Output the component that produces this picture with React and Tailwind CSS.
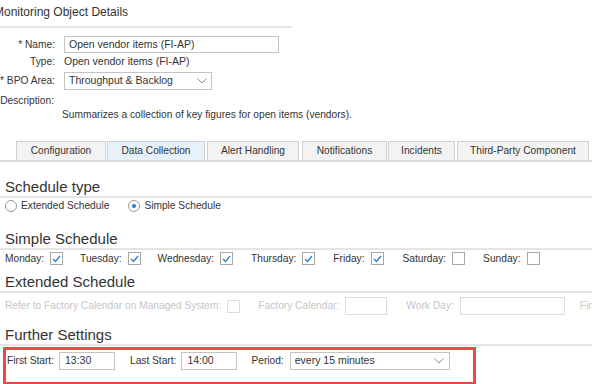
import React from "react";

const tabs = [
  { label: "Configuration", width: "w-[90px]", ml: "ml-0" },
  { label: "Data Collection", width: "w-[98px]", ml: "ml-[1px]", active: true },
  { label: "Alert Handling", width: "w-[92px]", ml: "ml-[2px]" },
  { label: "Notifications", width: "w-[85px]", ml: "ml-[3px]" },
  { label: "Incidents", width: "w-[67px]", ml: "ml-[1px]" },
  { label: "Third-Party Component", width: "w-[132px]", ml: "ml-[2px]" },
];

const days = [
  { label: "Monday:", ml: "ml-[5px]", checked: true },
  { label: "Tuesday:", ml: "ml-[17px]", checked: true },
  { label: "Wednesday:", ml: "ml-[17px]", checked: true },
  { label: "Thursday:", ml: "ml-[18px]", checked: true },
  { label: "Friday:", ml: "ml-[18px]", checked: true },
  { label: "Saturday:", ml: "ml-[19px]", checked: false },
  { label: "Sunday:", ml: "ml-[18px]", checked: false },
];

function Chevron() {
  return (
    <svg width="10" height="6" viewBox="0 0 10 6" className="shrink-0">
      <polyline
        points="0.5,0.5 5,5 9.5,0.5"
        fill="none"
        stroke="#8a8a8a"
        strokeWidth="1"
      />
    </svg>
  );
}

function Checkbox({ checked, disabled }) {
  return (
    <span
      className={
        "ml-[6px] flex h-[13px] w-[13px] shrink-0 items-center justify-center border bg-white " +
        (disabled ? "border-[#dcdcdc]" : "border-[#a8a8a8]")
      }
    >
      {checked ? (
        <svg width="9" height="8" viewBox="0 0 9 8">
          <polyline
            points="1,4 3.5,6.5 8,1"
            fill="none"
            stroke="#2a7fd0"
            strokeWidth="1.3"
          />
        </svg>
      ) : null}
    </span>
  );
}

function Heading({ children, className }) {
  return (
    <>
      <div className={"ml-[5px] h-[18px] text-[15px] leading-[18px] " + className}>
        {children}
      </div>
      <div className="h-[2px] w-full bg-[#e4e4e4]" />
    </>
  );
}

export default function App() {
  return (
    <div className="relative h-[384px] w-[592px] overflow-hidden bg-white font-['Liberation_Sans',Arial,sans-serif] text-[10.2px] text-[#333]">
      <div className="-ml-[6px] h-[24px] whitespace-nowrap text-[12px] leading-[24px]">
        Monitoring Object Details
      </div>
      <div className="mt-[2px] h-[2px] w-[292px] bg-[#e4e4e4]" />

      <div className="mt-[8px] flex h-[17px] items-center">
        <div className="flex w-[55px] justify-end whitespace-nowrap">* Name:</div>
        <div className="ml-[9px] flex h-[17px] w-[215px] items-center border border-[#c4c4c4] px-[4px] text-[10.5px]">
          Open vendor items (FI-AP)
        </div>
      </div>
      <div className="flex h-[18px] items-center">
        <div className="flex w-[55px] justify-end whitespace-nowrap">Type:</div>
        <div className="ml-[9px] text-[10.5px]">Open vendor items (FI-AP)</div>
      </div>
      <div className="mt-[1px] flex h-[18px] items-center">
        <div className="flex w-[55px] justify-end whitespace-nowrap">* BPO Area:</div>
        <div className="ml-[9px] flex h-[18px] w-[148px] items-center justify-between border border-[#c4c4c4] pl-[4px] pr-[4px] text-[10.5px]">
          <span>Throughput &amp; Backlog</span>
          <Chevron />
        </div>
      </div>
      <div className="mt-[4px] flex h-[14px] items-center">
        <div className="flex w-[54px] justify-end whitespace-nowrap">Description:</div>
      </div>
      <div className="flex h-[14px] items-center pl-[62px] whitespace-nowrap">
        Summarizes a collection of key figures for open items (vendors).
      </div>

      <div className="mt-[20px] flex h-[20px] items-end border-b-2 border-[#dadada] pl-[16px]">
        {tabs.map((tab) => (
          <div
            key={tab.label}
            className={
              "flex h-[19px] shrink-0 items-center justify-center whitespace-nowrap border border-b-0 border-[#cfcfcf] " +
              tab.width +
              " " +
              tab.ml +
              " " +
              (tab.active ? "bg-[#e6f1fb]" : "bg-[#f3f3f3]")
            }
          >
            {tab.label}
          </div>
        ))}
      </div>

      <Heading className="mt-[16px]">Schedule type</Heading>
      <div className="mt-[1px] flex h-[14px] items-center">
        <span className="ml-[5px] h-[12px] w-[12px] rounded-full border border-[#9a9a9a] bg-white" />
        <span className="ml-[4px]">Extended Schedule</span>
        <span className="ml-[19px] flex h-[12px] w-[12px] items-center justify-center rounded-full border border-[#9a9a9a] bg-white">
          <span className="h-[4px] w-[4px] rounded-full bg-[#1b7ed6]" />
        </span>
        <span className="ml-[4px]">Simple Schedule</span>
      </div>

      <Heading className="mt-[17px]">Simple Schedule</Heading>
      <div className="mt-[1px] flex h-[15px] items-center whitespace-nowrap">
        {days.map((day) => (
          <div key={day.label} className={"flex items-center " + day.ml}>
            <span>{day.label}</span>
            <Checkbox checked={day.checked} />
          </div>
        ))}
      </div>

      <Heading className="mt-[7px]">Extended Schedule</Heading>
      <div className="mt-[4px] flex h-[18px] items-center whitespace-nowrap text-[#c6c6c6]">
        <span className="ml-[5px]">Refer to Factory Calendar on Managed System:</span>
        <Checkbox disabled />
        <span className="ml-[18px]">Factory Calendar:</span>
        <span className="ml-[6px] h-[18px] w-[42px] shrink-0 border border-[#dcdcdc]" />
        <span className="ml-[19px]">Work Day:</span>
        <span className="ml-[6px] h-[18px] w-[105px] shrink-0 border border-[#dcdcdc]" />
        <span className="ml-[15px]">First Start:</span>
      </div>

      <Heading className="mt-[11px]">Further Settings</Heading>
      <div className="ml-[3px] mt-[1px] h-[38px] w-[473px] border-[3px] border-[#f04646] pl-[1px] pt-[2px]">
        <div className="flex h-[18px] items-center whitespace-nowrap">
          <span>First Start:</span>
          <span className="ml-[5px] flex h-[18px] w-[56px] items-center border border-[#c4c4c4] px-[5px] text-[10.5px]">
            13:30
          </span>
          <span className="ml-[15px]">Last Start:</span>
          <span className="ml-[5px] flex h-[18px] w-[56px] items-center border border-[#c4c4c4] px-[5px] text-[10.5px]">
            14:00
          </span>
          <span className="ml-[14px]">Period:</span>
          <span className="ml-[6px] flex h-[18px] w-[160px] items-center justify-between border border-[#c4c4c4] pl-[4px] pr-[5px] text-[10.5px]">
            <span>every 15 minutes</span>
            <Chevron />
          </span>
        </div>
      </div>
    </div>
  );
}
